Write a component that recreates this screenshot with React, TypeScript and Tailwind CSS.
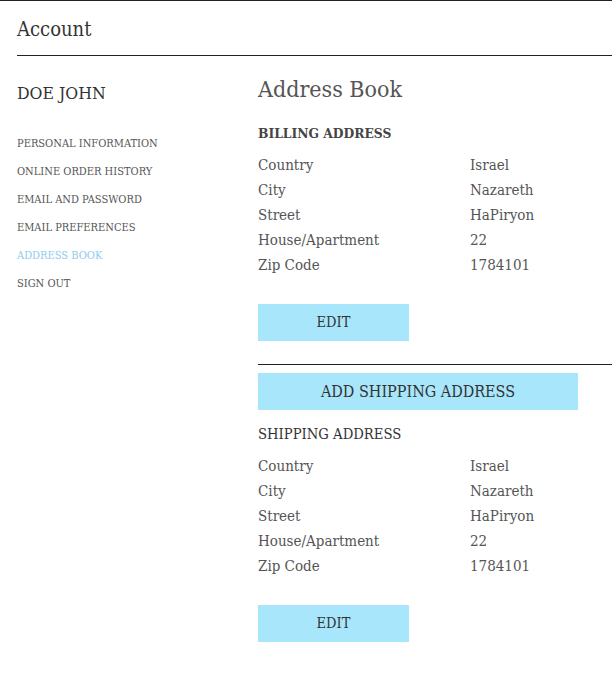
import React from "react";

const rows: [string, string][] = [
  ["Country", "Israel"],
  ["City", "Nazareth"],
  ["Street", "HaPiryon"],
  ["House/Apartment", "22"],
  ["Zip Code", "1784101"],
];

const nav = [
  "PERSONAL INFORMATION",
  "ONLINE ORDER HISTORY",
  "EMAIL AND PASSWORD",
  "EMAIL PREFERENCES",
  "ADDRESS BOOK",
  "SIGN OUT",
];

function Details() {
  return (
    <div className="flex flex-col">
      {rows.map(([k, v]) => (
        <div key={k} className="flex h-[25px] items-center text-[15px] text-[#555]">
          <div className="w-[212px]">{k}</div>
          <div>{v}</div>
        </div>
      ))}
    </div>
  );
}

export default function App() {
  return (
    <div
      className="w-[612px] min-h-[677px] bg-white text-[#333]"
      style={{ fontFamily: '"DejaVu Serif Condensed", "DejaVu Serif", "Liberation Serif", serif' }}
    >
      <div className="border-t border-[#222] pt-[15px] pl-[17px]">
        <div className="h-[39px] text-[20px] font-light text-[#333] leading-[26px]">Account</div>
        <div className="border-b border-[#222]" />
      </div>
      <div className="flex pl-[17px]">
        <div className="w-[241px] flex flex-col pt-[25px]">
          <div className="text-[17.5px] text-[#333] h-[36px] leading-[24px]">DOE JOHN</div>
          <div className="flex flex-col pt-[13px]">
            {nav.map((n) => (
              <div
                key={n}
                className={
                  "h-[28px] flex items-center text-[11px] " +
                  (n === "ADDRESS BOOK" ? "text-[#8ccbee]" : "text-[#555]")
                }
              >
                {n}
              </div>
            ))}
          </div>
        </div>
        <div className="flex-1 flex flex-col pt-[18px]">
          <div className="text-[23px] text-[#555] h-[34px] leading-[30px]">Address Book</div>
          <div className="text-[13.7px] font-bold text-[#444] mt-[16px] h-[18px] leading-[18px]">BILLING ADDRESS</div>
          <div className="mt-[11px]">
            <Details />
          </div>
          <button className="mt-[26px] w-[151px] h-[37px] bg-[#a8e6fc] text-[14.5px] text-[#333]">EDIT</button>
          <div className="mt-[23px] border-b border-[#222]" />
          <button className="mt-[8px] w-[320px] h-[37px] bg-[#a8e6fc] text-[16px] text-[#333]">
            ADD SHIPPING ADDRESS
          </button>
          <div className="text-[14.7px] text-[#333] mt-[15px] h-[18px] leading-[18px]">SHIPPING ADDRESS</div>
          <div className="mt-[11px]">
            <Details />
          </div>
          <button className="mt-[26px] w-[151px] h-[37px] bg-[#a8e6fc] text-[14.5px] text-[#333]">EDIT</button>
        </div>
      </div>
    </div>
  );
}
